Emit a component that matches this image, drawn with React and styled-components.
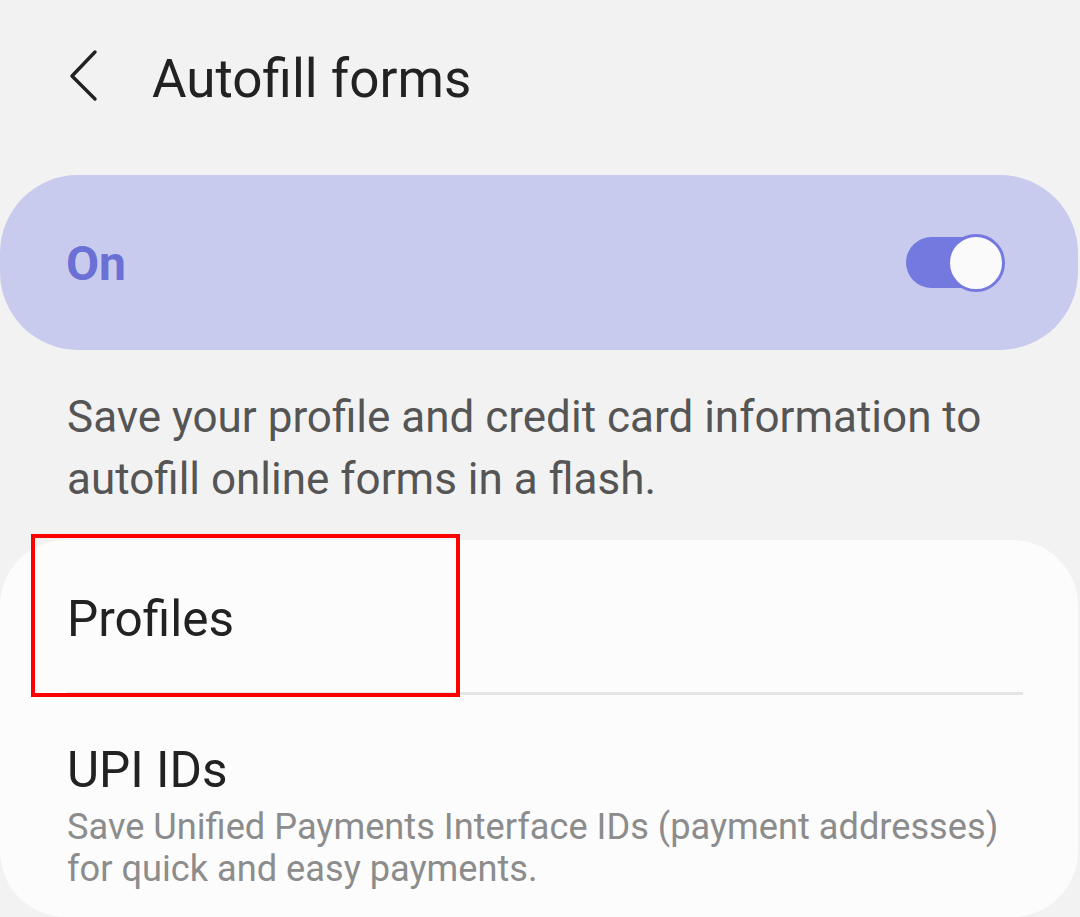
import React from "react";
import styled, { createGlobalStyle } from "styled-components";

const Global = createGlobalStyle`
  html, body { margin: 0; padding: 0; background: #f2f2f2; }
  body { font-family: Roboto, "Noto Sans", Arial, sans-serif; -webkit-font-smoothing: antialiased; }
  * { box-sizing: border-box; }
`;

const Page = styled.div`
  width: 1080px;
  height: 917px;
  overflow: hidden;
  background: #f2f2f2;
  display: flex;
  flex-direction: column;
`;

const Header = styled.header`
  height: 175px;
  display: flex;
  align-items: flex-start;
  padding-top: 42px;
  padding-left: 64px;
  gap: 48px;
`;

const BackButton = styled.button`
  border: 0;
  background: none;
  padding: 0;
  width: 40px;
  height: 60px;
  display: flex;
  align-items: center;
  justify-content: center;
  cursor: pointer;
`;

const Title = styled.h1`
  margin: 0;
  font-size: 53px;
  font-weight: 400;
  color: #222222;
  line-height: 72px;
  margin-top: 1px;
`;

const SwitchCard = styled.div`
  width: 1078px;
  height: 175px;
  border-radius: 78px;
  background: #c9cbee;
  display: flex;
  align-items: center;
  justify-content: space-between;
  padding: 0 73px 0 66px;
`;

const OnLabel = styled.span`
  font-size: 48px;
  font-weight: 700;
  color: #6b70d5;
  margin-top: 2px;
`;

const Toggle = styled.div`
  position: relative;
  width: 100px;
  height: 60px;
  display: flex;
  align-items: center;
`;

const Track = styled.div`
  width: 94px;
  height: 51px;
  border-radius: 26px;
  background: #7479e0;
  margin-left: 1px;
`;

const Thumb = styled.div`
  position: absolute;
  right: 0;
  top: 1px;
  width: 58px;
  height: 58px;
  border-radius: 50%;
  background: #fafafa;
  border: 3px solid #7479e0;
`;

const Description = styled.p`
  margin: 0;
  padding: 36px 60px 0 67px;
  height: 190px;
  flex-shrink: 0;
  font-size: 44px;
  line-height: 62px;
  color: #555555;
`;

const ListCard = styled.div`
  width: 1078px;
  flex: 1;
  background: #fcfcfc;
  border-radius: 66px;
  display: flex;
  flex-direction: column;
`;

const Item = styled.div`
  position: relative;
  padding: ${(p) => p.$pad};
  min-height: ${(p) => p.$h}px;
  margin: 0 55px 0 67px;
  border-bottom: ${(p) => (p.$divider ? "3px solid #e5e5e5" : "none")};
`;

const ItemTitle = styled.div`
  font-size: 49.5px;
  line-height: 60px;
  color: #222222;
`;

const ItemSub = styled.div`
  font-size: 36.2px;
  line-height: 42px;
  color: #8c8c8c;
  margin-top: 6px;
`;

const Highlight = styled.div`
  position: absolute;
  left: -36px;
  top: -6px;
  width: 429px;
  height: 163px;
  border: 4px solid #ff0000;
  pointer-events: none;
`;

export default function App() {
  return (
    <Page>
      <Global />
      <Header>
        <BackButton aria-label="Back">
          <svg width="40" height="60" viewBox="0 0 40 60">
            <path
              d="M31 12 L8 36 L31 59"
              fill="none"
              stroke="#222"
              strokeWidth="3.4"
              strokeLinecap="round"
              strokeLinejoin="round"
              transform="translate(0,-2)"
            />
          </svg>
        </BackButton>
        <Title>Autofill forms</Title>
      </Header>
      <SwitchCard>
        <OnLabel>On</OnLabel>
        <Toggle>
          <Track />
          <Thumb />
        </Toggle>
      </SwitchCard>
      <Description>
        Save your profile and credit card information to autofill online forms in a flash.
      </Description>
      <ListCard>
        <Item $pad="49px 0 0 0" $h={155} $divider>
          <ItemTitle>Profiles</ItemTitle>
          <Highlight />
        </Item>
        <Item $pad="45px 0 0 0" $h={120}>
          <ItemTitle>UPI IDs</ItemTitle>
          <ItemSub>
            Save Unified Payments Interface IDs (payment addresses) for quick and easy payments.
          </ItemSub>
        </Item>
      </ListCard>
    </Page>
  );
}
